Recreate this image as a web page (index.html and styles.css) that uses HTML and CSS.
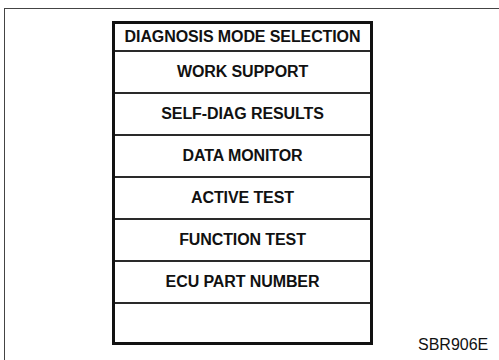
FILE: index.html
```html
<!DOCTYPE html>
<html lang="en">
<head>
    <meta charset="UTF-8">
    <meta name="viewport" content="width=device-width, initial-scale=1.0">
    <title>SBR906E - Diagnosis Mode Selection</title>
    <link rel="stylesheet" href="styles.css">
</head>
<body>

    <div class="frame">
        <div class="panel">
            <div class="panel-head">DIAGNOSIS MODE SELECTION</div>
            <div class="panel-row">WORK SUPPORT</div>
            <div class="panel-row">SELF-DIAG RESULTS</div>
            <div class="panel-row">DATA MONITOR</div>
            <div class="panel-row">ACTIVE TEST</div>
            <div class="panel-row">FUNCTION TEST</div>
            <div class="panel-row">ECU PART NUMBER</div>
            <div class="panel-row panel-row-last"></div>
        </div>
        <div class="fig-code">SBR906E</div>
    </div>

</body>
</html>
```

FILE: styles.css
```css
body {
    margin: 0;
    background: white;
    color: #111;
    font-family: 'Liberation Sans', Arial, sans-serif;
    overflow: hidden;
}
.frame {
    margin: 8px 0 0 4px;
    height: 360px;
    border-top: 1px solid #444;
    border-left: 1px solid #444;
    display: flex;
    align-items: flex-start;
}
.panel {
    margin: 12px 0 0 107px;
    width: 255px;
    border: 3px solid #111;
}
.panel-head,
.panel-row {
    display: flex;
    align-items: center;
    justify-content: center;
    font-weight: bold;
    font-size: 16px;
    letter-spacing: -0.1px;
}
.panel-head {
    height: 26px;
}
.panel-row {
    height: 40px;
    border-top: 2px solid #2a2a2a;
}
.panel-row-last {
    height: 38px;
}
.fig-code {
    margin: 327px 0 0 45px;
    font-size: 16px;
}
```
